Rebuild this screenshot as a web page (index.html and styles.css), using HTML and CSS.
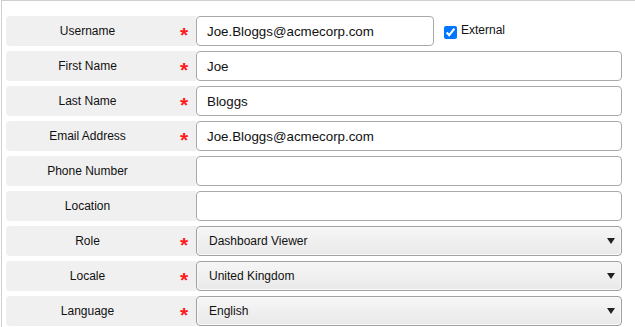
FILE: index.html
```html
<!DOCTYPE html>
<html>
<head>
<meta charset="utf-8">
<link rel="stylesheet" href="styles.css">
</head>
<body>
<div class="panel">
  <div class="row">
    <div class="label"><span class="text">Username</span><span class="req">*</span></div>
    <div class="field short">Joe.Bloggs@acmecorp.com</div>
    <label class="ext"><input type="checkbox" checked><span>External</span></label>
  </div>
  <div class="row">
    <div class="label"><span class="text">First Name</span><span class="req">*</span></div>
    <div class="field">Joe</div>
  </div>
  <div class="row">
    <div class="label"><span class="text">Last Name</span><span class="req">*</span></div>
    <div class="field">Bloggs</div>
  </div>
  <div class="row">
    <div class="label"><span class="text">Email Address</span><span class="req">*</span></div>
    <div class="field">Joe.Bloggs@acmecorp.com</div>
  </div>
  <div class="row">
    <div class="label"><span class="text">Phone Number</span><span class="req"></span></div>
    <div class="field"></div>
  </div>
  <div class="row">
    <div class="label"><span class="text">Location</span><span class="req"></span></div>
    <div class="field"></div>
  </div>
  <div class="row">
    <div class="label"><span class="text">Role</span><span class="req">*</span></div>
    <div class="select"><span>Dashboard Viewer</span><span class="arrow"></span></div>
  </div>
  <div class="row">
    <div class="label"><span class="text">Locale</span><span class="req">*</span></div>
    <div class="select"><span>United Kingdom</span><span class="arrow"></span></div>
  </div>
  <div class="row">
    <div class="label"><span class="text">Language</span><span class="req">*</span></div>
    <div class="select"><span>English</span><span class="arrow"></span></div>
  </div>
</div>
</body>
</html>
```

FILE: styles.css
```css
html, body {
  margin: 0;
  padding: 0;
  background: #fff;
  font-family: "Liberation Sans", Arial, sans-serif;
  color: #111;
  overflow: hidden;
}
.panel {
  margin-left: 1px;
  border-top: 1px solid #cfcfcf;
  border-left: 1px solid #cfcfcf;
  padding: 15px 0 0 4px;
  height: 100vh;
  box-sizing: border-box;
  display: flex;
  flex-direction: column;
  gap: 5px;
}
.row {
  display: flex;
  align-items: center;
  height: 30px;
  flex-shrink: 0;
}
.label {
  width: 190px;
  height: 30px;
  background: #f0f0f0;
  border-radius: 4px 0 0 4px;
  display: flex;
  align-items: center;
  font-size: 12px;
  color: #111;
}
.label .text {
  width: 163px;
  text-align: center;
}
.req {
  width: 27px;
  text-align: center;
  color: #ff1a1a;
  font-size: 21px;
  line-height: 30px;
  height: 30px;
  padding-top: 4px;
  box-sizing: border-box;
  font-weight: bold;
  padding-left: 3px;
}
.field {
  width: 426px;
  height: 30px;
  box-sizing: border-box;
  border: 1px solid #a9a9a9;
  border-radius: 4px;
  background: #fff;
  padding: 0 10px;
  display: flex;
  align-items: center;
  font-size: 13.33px;
  color: #111;
}
.field.short {
  width: 238px;
}
.ext {
  display: flex;
  align-items: center;
  margin-left: 8px;
  font-size: 12px;
  color: #111;
  margin-top: -1px;
}
.ext input {
  margin: 0 4px 0 2px;
  width: 13px;
  height: 13px;
  position: relative;
  top: 2px;
}
.ext span {
  position: relative;
  top: -1px;
}
.select {
  width: 426px;
  height: 30px;
  box-sizing: border-box;
  border: 1px solid #a0a0a0;
  border-radius: 4px;
  background: linear-gradient(#f6f6f6, #e9e9e9);
  box-shadow: inset 0 0 0 1px #fafafa;
  padding: 0 6px 0 12px;
  display: flex;
  align-items: center;
  justify-content: space-between;
  font-size: 12px;
  color: #111;
}
.arrow {
  width: 0;
  height: 0;
  border-left: 4px solid transparent;
  border-right: 4px solid transparent;
  border-top: 6px solid #222;
}
```
